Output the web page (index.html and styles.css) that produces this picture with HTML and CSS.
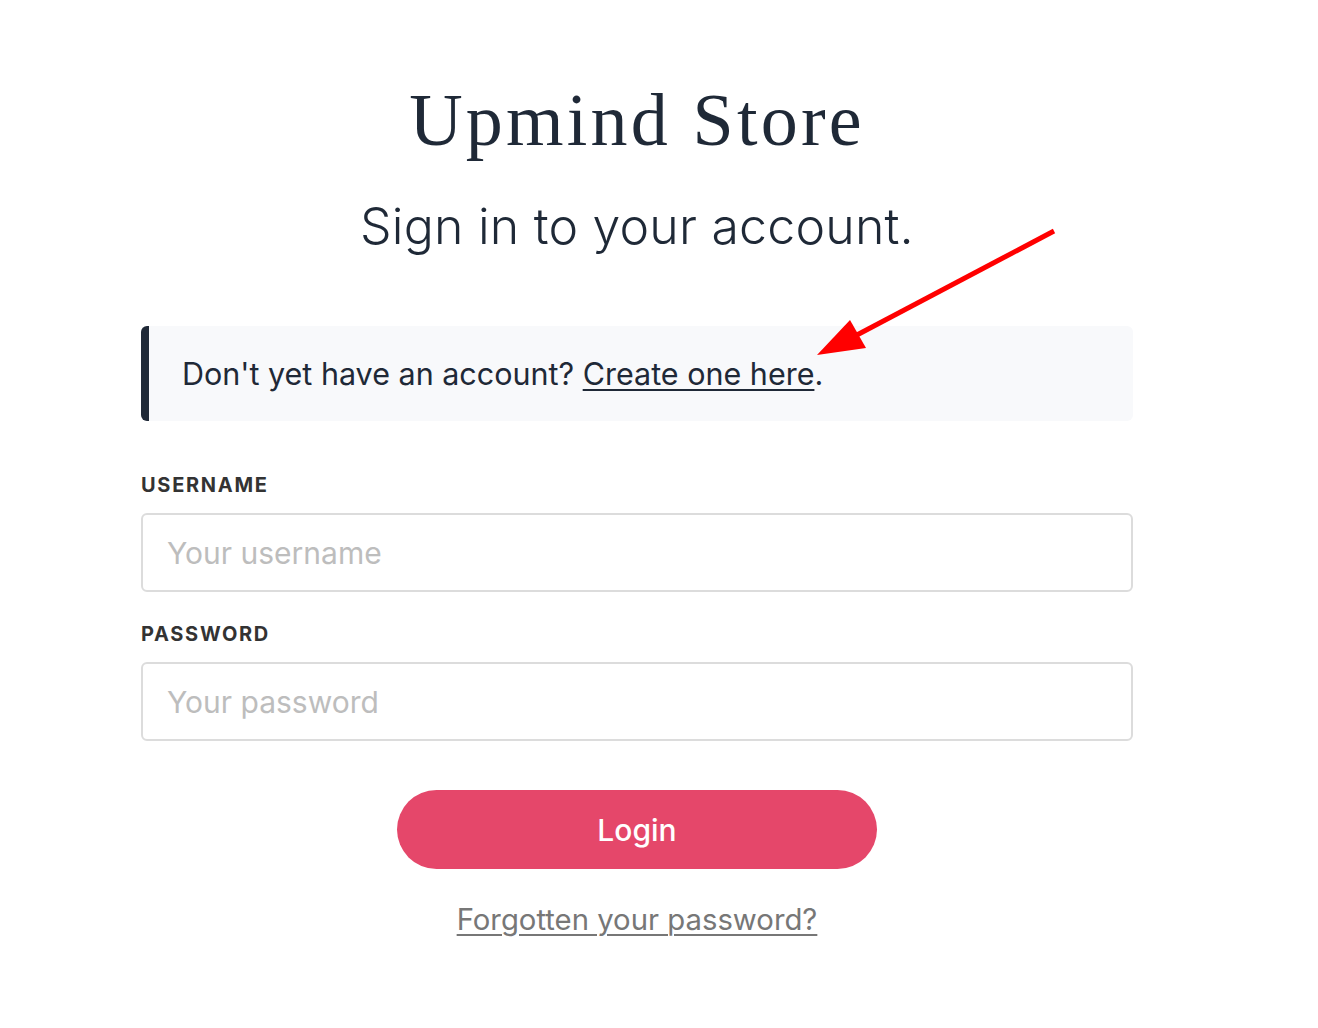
FILE: index.html
```html
<!DOCTYPE html>
<html lang="en">
<head>
<meta charset="utf-8">
<title>Upmind Store - Sign in</title>
<link rel="stylesheet" href="styles.css">
</head>
<body>
<main class="page">
  <h1 class="brand">Upmind Store</h1>
  <h2 class="subtitle">Sign in to your account.</h2>
  <div class="notice">
    Don't yet have an account? <a href="#" class="notice-link">Create one here</a>.
  </div>
  <form class="form">
    <label class="label" for="username">USERNAME</label>
    <input class="input" id="username" type="text" placeholder="Your username">
    <label class="label label-pw" for="password">PASSWORD</label>
    <input class="input" id="password" type="password" placeholder="Your password">
    <div class="actions">
      <button type="button" class="btn">Login</button>
      <a href="#" class="forgot">Forgotten your password?</a>
    </div>
  </form>
  <svg class="arrow" width="260" height="140" viewBox="0 0 260 140" aria-hidden="true">
    <line x1="254" y1="11" x2="55" y2="116" stroke="#ff0000" stroke-width="5" stroke-linecap="butt"/>
    <polygon points="17,135 50,100 66,128" fill="#ff0000"/>
  </svg>
</main>
</body>
</html>
```
FILE: styles.css
```css
* { box-sizing: border-box; }
html, body { margin: 0; padding: 0; background: #ffffff; }
body {
  font-family: Inter, "Noto Sans", "Liberation Sans", sans-serif;
  color: #1f2937;
}
.page {
  position: relative;
  width: 992px;
  margin-left: 141px;
  padding-top: 83px;
  padding-bottom: 80px;
}
.brand {
  margin: 0;
  font-family: "Liberation Serif", "DejaVu Serif", serif;
  font-weight: 400;
  font-size: 74px;
  line-height: 74px;
  letter-spacing: 3.2px;
  text-align: center;
  color: #1f2937;
}
.subtitle {
  margin: 44px 0 0;
  font-weight: 300;
  font-size: 50px;
  line-height: 50px;
  letter-spacing: 0.2px;
  text-align: center;
  color: #1f2937;
}
.notice {
  margin-top: 75px;
  height: 95px;
  display: flex;
  align-items: center;
  padding-left: 33px;
  background: #f8f9fb;
  border-left: 8px solid #1f2937;
  border-radius: 6px;
  font-size: 30.5px;
  color: #1f2937;
}
.notice-link {
  color: #1f2937;
  text-decoration: underline;
  text-underline-offset: 4px;
  text-decoration-thickness: 2px;
  margin-left: 0.28em;
}
.form {
  display: flex;
  flex-direction: column;
  margin-top: 52px;
}
.label {
  font-size: 20px;
  line-height: 24px;
  font-weight: 700;
  letter-spacing: 1.7px;
  color: #333333;
}
.label-pw { margin-top: 30px; }
.input {
  margin-top: 16px;
  width: 992px;
  height: 79px;
  border: 2px solid #dcdcdc;
  border-radius: 6px;
  padding: 0 24px;
  font-family: Inter, "Noto Sans", sans-serif;
  font-size: 30px;
  color: #333;
  background: #fff;
}
.input::placeholder { color: #bdbdbd; }
.actions {
  display: flex;
  flex-direction: column;
  align-items: center;
  margin-top: 49px;
}
.btn {
  width: 480px;
  height: 79px;
  border: none;
  border-radius: 40px;
  background: #e5476a;
  color: #ffffff;
  font-family: Inter, "Noto Sans", sans-serif;
  font-size: 30px;
  font-weight: 500;
}
.forgot {
  margin-top: 33px;
  font-size: 29.3px;
  color: #777777;
  text-decoration: underline;
  text-underline-offset: 4px;
  text-decoration-thickness: 2px;
}
.arrow {
  position: absolute;
  left: 659px;
  top: 220px;
}
```
